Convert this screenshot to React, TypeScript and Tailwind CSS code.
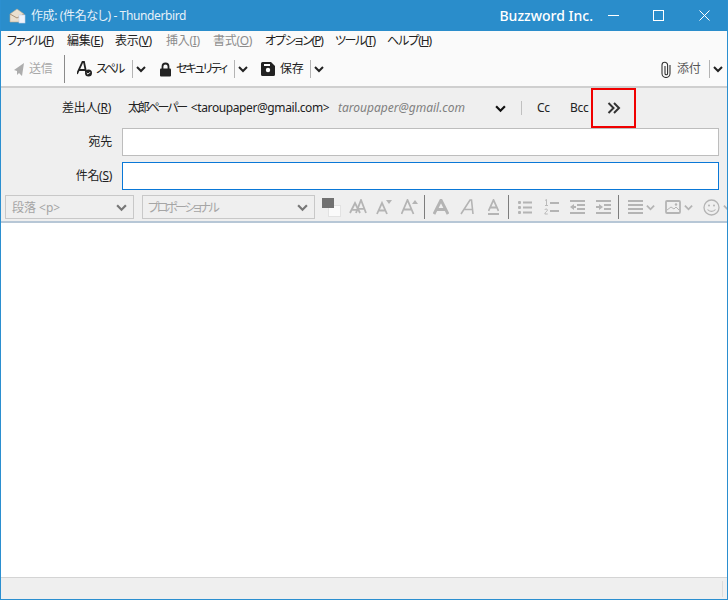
import React from 'react';

const font = { fontFamily: '"Noto Sans", "Noto Sans CJK JP", sans-serif' };

function U({ children }: { children: React.ReactNode }) {
  return <span className="underline underline-offset-1">{children}</span>;
}

function Chevron({ className = '', size = 10, width = 2 }: { className?: string; size?: number; width?: number }) {
  return (
    <svg width={size} height={size} viewBox="0 0 10 10" className={`shrink-0 ${className}`}>
      <path d="M1 3l4 4 4-4" fill="none" stroke="currentColor" strokeWidth={width} />
    </svg>
  );
}

function SplitArrow({ className = '' }: { className?: string }) {
  return (
    <div className={`flex items-center ${className}`}>
      <div className="w-px h-[18px] bg-[#b4b4b4]" />
      <Chevron className="ml-[3px] text-[#222]" />
    </div>
  );
}

function Ico({ w = 16, h = 16, className = '', children }: { w?: number; h?: number; className?: string; children: React.ReactNode }) {
  return (
    <svg width={w} height={h} viewBox={`0 0 ${w} ${h}`} className={`shrink-0 ${className}`}>
      {children}
    </svg>
  );
}

const G = '#b4b4b4';

function Sep() {
  return <div className="w-px h-[24px] bg-[#7d7d7d] shrink-0" />;
}

// letter A drawn as a toolbar icon
function GlyphA({ x = 0, w = 12, h = 14, sw = 2, top = 1 }: { x?: number; w?: number; h?: number; sw?: number; top?: number }) {
  const bottom = top + h;
  const mid = x + w / 2;
  return (
    <path
      d={`M${x} ${bottom}L${mid} ${top}L${x + w} ${bottom}M${x + w * 0.2} ${top + h * 0.68}H${x + w * 0.8}`}
      fill="none"
      stroke={G}
      strokeWidth={sw}
    />
  );
}

function FormatBar() {
  return (
    <div className="flex items-center h-[24px] pl-[4px] mt-[5px] mb-[2px] overflow-hidden">
      <div className="w-[129px] h-[24px] shrink-0 border border-[#c8c8c8] flex items-center justify-between pl-[6px] pr-[6px] pt-px text-[12px] text-[#a5a5a5]">
        <span className="tracking-[0px]">段落 &lt;p&gt;</span>
        <Chevron size={11} className="text-[#777]" />
      </div>
      <div className="w-[173px] h-[24px] shrink-0 ml-[8px] border border-[#c8c8c8] flex items-center justify-between pl-[5px] pr-[6px] pt-px text-[12px] text-[#a5a5a5]">
        <span className="tracking-[-2.4px]">プロポーショナル</span>
        <Chevron size={11} className="text-[#777]" />
      </div>
      {/* colour swatch */}
      <Ico w={20} h={20} className="ml-[7px]">
        <rect x="6.500" y="8.500" width="12" height="11" fill="#fafafa" stroke="#e2e2e2" />
        <rect x="0" y="1" width="12" height="10" fill="#717171" />
      </Ico>
      {/* font sizes */}
      <Ico w={18} h={16} className="ml-[7px]">
        <GlyphA x={1} w={10} h={10} top={4} sw={1.8} />
        <GlyphA x={7} w={10} h={13} top={1} sw={1.8} />
      </Ico>
      <Ico w={17} h={16} className="ml-[9px]">
        <GlyphA x={1} w={10} h={11} top={4} sw={1.8} />
        <path d="M10 1h6l-3 4z" fill={G} />
      </Ico>
      <Ico w={17} h={16} className="ml-[8px]">
        <GlyphA x={0.500} w={12} h={14} top={1} sw={1.8} />
        <path d="M11 5h6l-3-4z" fill={G} />
      </Ico>
      <div className="ml-[6px]"><Sep /></div>
      <Ico w={16} h={16} className="ml-[8px]">
        <GlyphA x={1} w={14} h={14} top={1} sw={2.800} />
      </Ico>
      <Ico w={14} h={16} className="ml-[11px]">
        <path d="M1 15L10 1h1.500L13 15M4 10.500h8.500" fill="none" stroke={G} strokeWidth="1.600" />
      </Ico>
      <Ico w={11} h={17} className="ml-[14px]">
        <GlyphA x={0.500} w={10} h={11} top={1} sw={1.800} />
        <rect x="0" y="14" width="11" height="2" fill={G} />
      </Ico>
      <div className="ml-[9px]"><Sep /></div>
      <Ico w={14} h={14} className="ml-[9px]">
        <g fill={G}>
          <rect x="0" y="1" width="3" height="3" rx="1" /><rect x="5" y="1.500" width="9" height="2" />
          <rect x="0" y="6" width="3" height="3" rx="1" /><rect x="5" y="6.500" width="9" height="2" />
          <rect x="0" y="11" width="3" height="3" rx="1" /><rect x="5" y="11.500" width="9" height="2" />
        </g>
      </Ico>
      <Ico w={15} h={16} className="ml-[12px]">
        <path d="M1 1.500l1.500-1v6M1 6.500h3M.8 11a1.400 1.400 0 012.700 0c0 1.200-2.700 2.300-2.700 4h3" fill="none" stroke={G} strokeWidth=".9" />
        <rect x="6" y="3" width="9" height="2" fill={G} /><rect x="6" y="11" width="9" height="2" fill={G} />
      </Ico>
      <Ico w={15} h={14} className="ml-[11px]">
        <g fill={G}>
          <rect x="0" y="0" width="15" height="2" /><rect x="7" y="4" width="8" height="2" /><rect x="7" y="8" width="8" height="2" /><rect x="0" y="12" width="15" height="2" />
          <path d="M0 7l4-3v2h2v2H4v2z" />
        </g>
      </Ico>
      <Ico w={15} h={14} className="ml-[11px]">
        <g fill={G}>
          <rect x="0" y="0" width="15" height="2" /><rect x="8" y="4" width="7" height="2" /><rect x="8" y="8" width="7" height="2" /><rect x="0" y="12" width="15" height="2" />
          <path d="M7 7L3 4v2H0v2h3v2z" />
        </g>
      </Ico>
      <div className="ml-[7px]"><Sep /></div>
      <Ico w={15} h={14} className="ml-[9px]">
        <g fill={G}>
          <rect x="0" y="0" width="15" height="2" /><rect x="0" y="4" width="15" height="2" /><rect x="0" y="8" width="15" height="2" /><rect x="0" y="12" width="15" height="2" />
        </g>
      </Ico>
      <Chevron size={9} className="ml-[3px] text-[#b4b4b4]" />
      <Ico w={16} h={14} className="ml-[10px]">
        <rect x="1" y="1" width="14" height="12" rx="1" fill="none" stroke={G} strokeWidth="1.800" />
        <path d="M2 10l4-3 3 2 2-2 3 3" fill="none" stroke={G} />
        <circle cx="11" cy="4.500" r="1.200" fill={G} />
      </Ico>
      <Chevron size={9} className="ml-[3px] text-[#b4b4b4]" />
      <Ico w={17} h={17} className="ml-[10px]">
        <circle cx="8.500" cy="8.500" r="7.500" fill="none" stroke={G} strokeWidth="1.300" />
        <circle cx="6" cy="6.500" r="1" fill={G} /><circle cx="11" cy="6.500" r="1" fill={G} />
        <path d="M4.500 10.500c2 2.500 6 2.500 8 0" fill="none" stroke={G} strokeWidth="1.200" />
      </Ico>
      <Chevron size={9} className="ml-[3px] text-[#b4b4b4]" />
    </div>
  );
}

export default function App() {
  return (
    <div style={font} className="w-[728px] h-[600px] flex flex-col overflow-hidden border border-t-0 border-[#2b8fd0] bg-white text-[#222] [font-feature-settings:'palt'] tracking-[-0.3px]">
      {/* title bar */}
      <div className="h-[31px] -mx-px flex items-center bg-[#2a8dcb] text-white shrink-0">
        <Ico w={18} h={17} className="ml-[9px]">
          <path d="M1 7l7-5 7 5v8H1z" fill="#e9dfcf" stroke="#b9a98e" strokeWidth="0.600" />
          <path d="M1 7l7 4 7-4" fill="none" stroke="#a8927a" />
          <rect x="10" y="8" width="6" height="8" fill="#eef3fb" stroke="#c4d4ea" strokeWidth="0.600" />
        </Ico>
        <span className="ml-[4px] text-[12px] text-[#e6f1f9] tracking-[-0.38px]">作成: (件名なし) - Thunderbird</span>
        <span className="ml-auto text-[14px] font-medium tracking-[0px]">Buzzword Inc.</span>
        <Ico w={11} h={11} className="ml-[15px]">
          <path d="M0 5.500h11" stroke="#fff" />
        </Ico>
        <Ico w={11} h={11} className="ml-[34px]">
          <rect x=".5" y=".5" width="10" height="10" fill="none" stroke="#fff" />
        </Ico>
        <Ico w={11} h={11} className="ml-[35px] mr-[18px]">
          <path d="M.5.5l10 10M10.500.5l-10 10" stroke="#fff" />
        </Ico>
      </div>

      {/* menu */}
      <div className="h-[20px] flex items-center bg-[#fafafa] pl-[6px] text-[12px] text-[#222] shrink-0 whitespace-nowrap">
        <span className="w-[60px] tracking-[-1.3px]">ファイル(<U>F</U>)</span>
        <span className="w-[48px]">編集(<U>E</U>)</span>
        <span className="w-[51px]">表示(<U>V</U>)</span>
        <span className="w-[47px] text-[#8c8c8c]">挿入(<U>I</U>)</span>
        <span className="w-[52px] text-[#8c8c8c]">書式(<U>O</U>)</span>
        <span className="w-[70px] tracking-[-1.2px]">オプション(<U>P</U>)</span>
        <span className="w-[52px] tracking-[-1.4px]">ツール(<U>T</U>)</span>
        <span className="tracking-[-1.1px]">ヘルプ(<U>H</U>)</span>
      </div>

      {/* toolbar */}
      <div className="h-[37px] flex items-center bg-[#fafafa] border-b-2 border-[#cfcfcf] pt-px text-[12px] shrink-0 whitespace-nowrap">
        <Ico w={12} h={13} className="ml-[12px]">
          <path d="M11 0L1 7l3 1v4l2-2 3 3z" fill="#adadad" />
        </Ico>
        <span className="ml-[4px] w-[24px] text-[#a8a8a8]">送信</span>
        <div className="ml-[11px] w-px h-[28px] bg-[#8a8a8a]" />
        <Ico w={16} h={16} className="ml-[12px]">
          <path d="M0 13L5.500 1h1.500L9 11M2 9h6" fill="none" stroke="#222" strokeWidth="1.800" />
          <circle cx="11.500" cy="12" r="3.500" fill="#222" />
          <path d="M9.800 12l1.200 1.200 2-2" stroke="#fff" fill="none" />
        </Ico>
        <span className="ml-[3px] w-[29px] tracking-[-2px]">スペル</span>
        <SplitArrow className="ml-[7px]" />
        <Ico w={13} h={15} className="ml-[13px]">
          <path d="M3.500 7V4.500a3 3 0 016 0V7" fill="none" stroke="#222" strokeWidth="1.800" />
          <rect x="1" y="6.500" width="11" height="8" rx="1" fill="#222" />
        </Ico>
        <span className="ml-[4px] w-[51px] tracking-[-2px]">セキュリティ</span>
        <SplitArrow className="ml-[7px]" />
        <Ico w={14} h={14} className="ml-[13px]">
          <path d="M1.500 0h8.500l4 4v8.500a1.500 1.500 0 01-1.500 1.500h-11A1.500 1.500 0 010 12.500v-11A1.500 1.500 0 011.500 0z" fill="#222" />
          <circle cx="7" cy="8" r="2.200" fill="#fff" />
          <rect x="3" y="2" width="6" height="2" fill="#fff" />
        </Ico>
        <span className="ml-[5px] w-[23px]">保存</span>
        <SplitArrow className="ml-[7px]" />
        <Ico w={12} h={17} className="ml-auto">
          <path d="M10 4v8.500a4 4 0 01-8 0V4a2.800 2.800 0 015.600 0v8.500a1.300 1.300 0 01-2.600 0V5" fill="none" stroke="#333" strokeWidth="1.100" />
        </Ico>
        <span className="ml-[5px] w-[24px] text-[#555]">添付</span>
        <SplitArrow className="ml-[8px] mr-[4px]" />
      </div>

      {/* compose header */}
      <div className="bg-[#efefef] border-b-2 border-[#b7c7d6] shrink-0">
        <div className="h-[40px] flex items-center text-[12px] whitespace-nowrap">
          <span className="w-[110px] text-right">差出人(<U>R</U>)</span>
          <span className="ml-[17px] w-[203px]">
            <span className="tracking-[-2.2px]">太郎ペーパー</span>
            <span className="ml-[5px] tracking-[-0.4px]">&lt;taroupaper@gmail.com&gt;</span>
          </span>
          <span className="ml-[7px] w-[126px] italic text-[#808080] tracking-[0px]">taroupaper@gmail.com</span>
          <Chevron size={11} className="ml-[31px] text-[#111]" />
          <div className="ml-[15px] w-px h-[14px] bg-[#c0c0c0]" />
          <span className="ml-[15px] w-[14px]">Cc</span>
          <span className="ml-[19px] w-[17px]">Bcc</span>
          {/* highlighted overflow button */}
          <div className="ml-[4px] w-[45px] h-[40px] border-2 border-[#f00000] flex items-center justify-center">
            <svg width="14" height="12" viewBox="0 0 14 12">
              <path d="M1.500 1l5 5-5 5M7 1l5 5-5 5" fill="none" stroke="#333" strokeWidth="2" />
            </svg>
          </div>
        </div>
        <div className="flex items-center h-[28px] text-[12px]">
          <span className="w-[111px] text-right">宛先</span>
          <div className="ml-[10px] w-[597px] h-[28px] bg-white border border-[#bdbdbd]" />
        </div>
        <div className="flex items-center h-[28px] mt-[6px] text-[12px]">
          <span className="w-[111px] text-right">件名(<U>S</U>)</span>
          <div className="ml-[10px] w-[597px] h-[28px] bg-white border border-[#0a78d7]" />
        </div>
        <FormatBar />
      </div>

      {/* body */}
      <div className="flex-1 bg-white" />

      {/* status bar */}
      <div className="h-[22px] bg-[#efefef] border-t border-[#d4d4d4] flex items-center justify-end shrink-0">
        <div className="w-px h-[16px] bg-[#dcdcdc] mr-[4px]" />
      </div>
    </div>
  );
}
